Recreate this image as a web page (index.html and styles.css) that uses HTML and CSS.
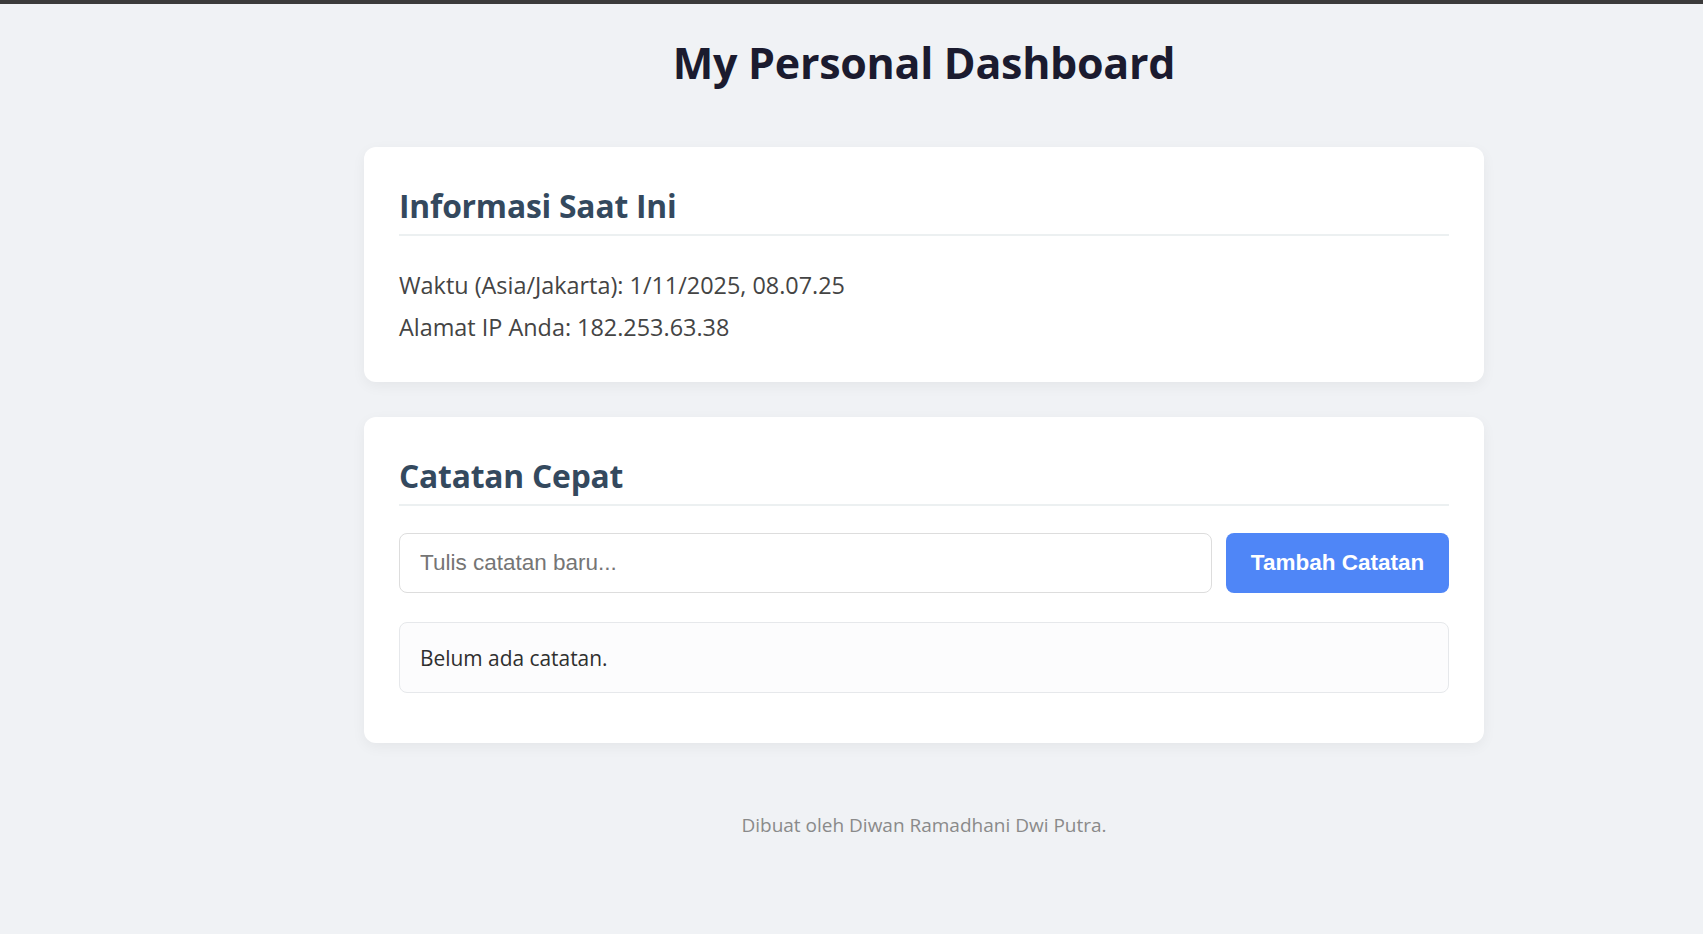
FILE: index.html
```html
<!DOCTYPE html>
<html lang="id">
<head>
<meta charset="utf-8">
<title>My Personal Dashboard</title>
<link rel="stylesheet" href="styles.css">
</head>
<body>
<div class="page">
  <h1 class="title">My Personal Dashboard</h1>
  <main class="container">
    <section class="card">
      <h2 class="card-title">Informasi Saat Ini</h2>
      <div class="info">
        <p class="info-line">Waktu (Asia/Jakarta): 1/11/2025, 08.07.25</p>
        <p class="info-line">Alamat IP Anda: 182.253.63.38</p>
      </div>
    </section>
    <section class="card">
      <h2 class="card-title">Catatan Cepat</h2>
      <form class="note-form">
        <input class="note-input" type="text" placeholder="Tulis catatan baru...">
        <button class="note-button" type="button">Tambah Catatan</button>
      </form>
      <ul class="note-list">
        <li class="note-empty">Belum ada catatan.</li>
      </ul>
    </section>
  </main>
  <footer class="footer">Dibuat oleh Diwan Ramadhani Dwi Putra.</footer>
</div>
</body>
</html>
```

FILE: styles.css
```css
html, body {
  margin: 0;
  padding: 0;
}

body {
  background: #f0f2f5;
  border-top: 4px solid #3b3b3b;
  font-family: "Open Sans", "Noto Sans", sans-serif;
  min-height: 930px;
}

.page {
  display: flex;
  flex-direction: column;
  align-items: center;
  padding-left: 145px;
}

.title {
  margin: 32px 0 0;
  font-size: 43px;
  line-height: 54px;
  font-weight: 700;
  color: #1b1b2f;
  letter-spacing: -0.3px;
}

.container {
  width: 1120px;
  margin-top: 57px;
  display: flex;
  flex-direction: column;
  gap: 35px;
}

.card {
  background: #ffffff;
  border-radius: 12px;
  box-shadow: 0 4px 14px rgba(0, 0, 0, 0.05);
  padding: 35px;
}

.card-title {
  margin: 3px 0 0;
  padding-bottom: 8px;
  border-bottom: 2px solid #ecf0f1;
  font-size: 31.8px;
  line-height: 41px;
  font-weight: 700;
  color: #34495e;
  letter-spacing: -0.2px;
}

.info {
  margin-top: 28px;
  margin-bottom: -1px;
}

.info-line {
  margin: 0;
  font-size: 23.4px;
  line-height: 42px;
  color: #444444;
}

.note-form {
  display: flex;
  gap: 14px;
  margin: 27px 0 0;
}

.note-input {
  flex: 1;
  height: 60px;
  box-sizing: border-box;
  border: 1px solid #dddddd;
  border-radius: 8px;
  padding: 0 20px;
  font-family: "Liberation Sans", Arial, sans-serif;
  font-size: 22.5px;
  color: #333333;
  background: #ffffff;
}

.note-input::placeholder {
  color: #757575;
}

.note-button {
  width: 223px;
  height: 60px;
  border: none;
  border-radius: 8px;
  background: #4f86f7;
  color: #ffffff;
  font-family: "Liberation Sans", Arial, sans-serif;
  font-size: 22.5px;
  font-weight: 700;
}

.note-list {
  list-style: none;
  margin: 29px 0 15px;
  padding: 0;
}

.note-empty {
  box-sizing: border-box;
  height: 71px;
  border: 1px solid #e6e8eb;
  border-radius: 8px;
  background: #fcfcfd;
  padding: 0 20px;
  display: flex;
  align-items: center;
  font-size: 20.9px;
  color: #2f2f2f;
}

.footer {
  margin-top: 68px;
  font-size: 19px;
  line-height: 28px;
  color: #8a8a8a;
}
```
